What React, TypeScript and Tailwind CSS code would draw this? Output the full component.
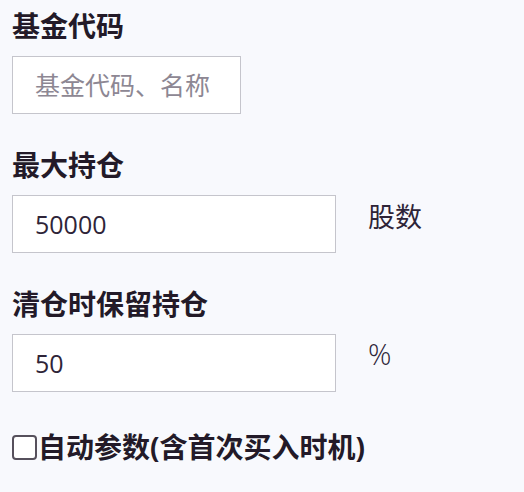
export default function App() {
  const label = "text-[28px] leading-[32px] font-bold text-[#231a28]";
  const input =
    "h-[58px] border border-[#c5c5cc] bg-white px-[22px] text-[25px] text-[#2e2438] outline-none placeholder:text-[#8d8793]";

  return (
    <div
      className="min-h-screen w-[524px] bg-[#f8f9fd] px-3 pt-[10px]"
      style={{ fontFamily: '"Open Sans", "Noto Sans CJK SC", sans-serif' }}
    >
      <div className={label}>基金代码</div>
      <input className={`${input} mt-[14px] w-[229px] text-[24px]`} placeholder="基金代码、名称" />

      <div className={`${label} mt-[35px]`}>最大持仓</div>
      <div className="mt-[14px] flex items-start gap-8">
        <input className={`${input} w-[324px]`} defaultValue="50000" />
        <span className="mt-[6px] text-[27px] leading-[32px] text-[#2e2438]">股数</span>
      </div>

      <div className={`${label} mt-[35px]`}>清仓时保留持仓</div>
      <div className="mt-[14px] flex items-start gap-8">
        <input className={`${input} w-[324px]`} defaultValue="50" />
        <span className="mt-[4px] text-[29px] leading-[32px] font-light text-[#2e2438]">%</span>
      </div>

      <label className="mt-[39px] flex items-center">
        <input
          type="checkbox"
          className="h-[25px] w-[25px] shrink-0 appearance-none rounded-[4px] border-2 border-[#56505c] bg-white"
        />
        <span className="ml-px text-[28px] leading-[32px] font-bold text-[#231a28]">自动参数(含首次买入时机)</span>
      </label>
    </div>
  );
}
